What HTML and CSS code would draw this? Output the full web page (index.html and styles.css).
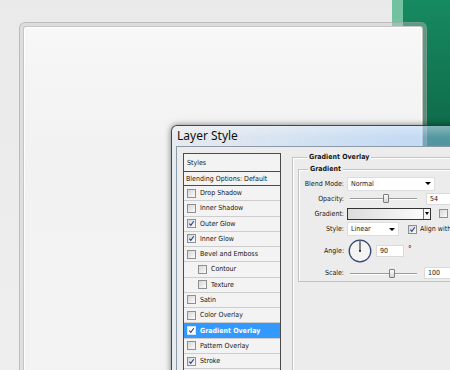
FILE: index.html
```html
<!DOCTYPE html>
<html>
<head>
<meta charset="utf-8">
<title>Layer Style</title>
<link rel="stylesheet" href="styles.css">
</head>
<body>
<div class="desk">
  <div class="green"></div>
  <div class="panel"><div class="panel-inner"></div></div>
  <div class="dialog">
    <div class="titlebar">Layer Style</div>
    <div class="client">
      <div class="list">
        <div class="row styles">Styles</div>
        <div class="row blend">Blending Options: Default</div>
        <div class="row"><span class="cb"></span>Drop Shadow</div>
        <div class="row"><span class="cb"></span>Inner Shadow</div>
        <div class="row"><span class="cb"><svg viewBox="0 0 8 8"><path d="M1.5 4.2 L3.2 6.2 L6.6 1.4"/></svg></span>Outer Glow</div>
        <div class="row"><span class="cb"><svg viewBox="0 0 8 8"><path d="M1.5 4.2 L3.2 6.2 L6.6 1.4"/></svg></span>Inner Glow</div>
        <div class="row"><span class="cb"></span>Bevel and Emboss</div>
        <div class="row sub"><span class="cb"></span>Contour</div>
        <div class="row sub"><span class="cb"></span>Texture</div>
        <div class="row"><span class="cb"></span>Satin</div>
        <div class="row"><span class="cb"></span>Color Overlay</div>
        <div class="row sel"><span class="cb"><svg viewBox="0 0 8 8"><path d="M1.5 4.2 L3.2 6.2 L6.6 1.4"/></svg></span>Gradient Overlay</div>
        <div class="row"><span class="cb"></span>Pattern Overlay</div>
        <div class="row"><span class="cb"><svg viewBox="0 0 8 8"><path d="M1.5 4.2 L3.2 6.2 L6.6 1.4"/></svg></span>Stroke</div>
        <div class="row"><span class="cb"></span></div>
      </div>
      <div class="settings">
        <div class="gbox outer">
          <div class="legend">Gradient Overlay</div>
          <div class="gbox inner">
            <div class="legend">Gradient</div>
            <div class="frow r1">
              <span class="lbl">Blend Mode:</span>
              <div class="dd dd-blend"><span>Normal</span><i class="arrow"></i></div>
            </div>
            <div class="frow r2">
              <span class="lbl">Opacity:</span>
              <div class="slider"><span class="thumb" style="left:33px"></span></div>
              <div class="num n-op">54</div>
            </div>
            <div class="frow r3">
              <span class="lbl">Gradient:</span>
              <div class="grad"><span class="grad-fill"></span><span class="grad-btn"><i class="arrow"></i></span></div>
              <span class="cb cb-rev"></span><span class="after">Reverse</span>
            </div>
            <div class="frow r4">
              <span class="lbl">Style:</span>
              <div class="dd dd-style"><span>Linear</span><i class="arrow"></i></div>
              <span class="cb cb-align"><svg viewBox="0 0 8 8"><path d="M1.5 4.2 L3.2 6.2 L6.6 1.4"/></svg></span><span class="after">Align with Layer</span>
            </div>
            <div class="frow r5">
              <span class="lbl">Angle:</span>
              <svg class="dial" viewBox="0 0 24 24"><circle cx="12" cy="12" r="10.8" fill="#f4f4f4" stroke="#34476c" stroke-width="1.3"/><line x1="12" y1="12" x2="12" y2="2" stroke="#151515" stroke-width="1"/><circle cx="12" cy="12" r="1" fill="#151515"/></svg>
              <div class="num n-ang">90</div>
              <span class="deg">°</span>
            </div>
            <div class="frow r6">
              <span class="lbl">Scale:</span>
              <div class="slider"><span class="thumb" style="left:39px"></span></div>
              <div class="num n-sc">100</div>
            </div>
          </div>
        </div>
      </div>
    </div>
  </div>
</div>
</body>
</html>
```
FILE: styles.css
```css
* { box-sizing: border-box; }
html, body { margin: 0; padding: 0; }
body {
  width: 450px;
  height: 370px;
  overflow: hidden;
  background: #ececec;
  font-family: "DejaVu Sans Condensed", "DejaVu Sans", sans-serif;
  color: #161616;
}
.desk {
  position: relative;
  width: 450px;
  height: 370px;
  overflow: hidden;
  background: linear-gradient(#eaeaea, #eeeeee);
}
.green {
  position: absolute;
  left: 392px;
  top: 0;
  width: 58px;
  height: 370px;
  background:
    linear-gradient(to right, #72c2a1 0, #72c2a1 11px, transparent 11px),
    linear-gradient(#168a61, #0f6b49 130px, #0c5f41);
}
.panel {
  position: absolute;
  left: 19px;
  top: 22px;
  width: 408px;
  height: 400px;
  border: 1px solid rgba(150, 150, 150, .45);
  border-radius: 6px;
  background: rgba(200, 200, 200, .38);
  padding: 3px;
}
.panel-inner {
  height: 100%;
  border: 1px solid rgba(185, 185, 185, .8);
  border-radius: 3px;
  background: linear-gradient(#f7f7f7, #f2f2f2 120px, #f3f3f3);
  box-shadow: inset 1px 1px 0 #fff, inset -1px 0 0 #fff;
}
.dialog {
  position: absolute;
  left: 171px;
  top: 125px;
  width: 320px;
  height: 300px;
  border: 1px solid rgba(35, 45, 60, .85);
  border-radius: 6px 6px 0 0;
  display: flex;
  flex-direction: column;
  background:
    linear-gradient(rgba(255, 255, 255, .3), rgba(255, 255, 255, 0) 12px),
    linear-gradient(to right, rgba(226, 230, 236, .65), rgba(150, 195, 245, .5) 230px);
  box-shadow: 0 0 6px rgba(0, 0, 0, .5);
}
.titlebar {
  height: 20px;
  flex: none;
  padding-left: 5px;
  font: 12px/20px "Noto Sans", sans-serif;
  color: #111;
}
.client {
  flex: 1;
  margin-left: 4px;
  border-left: 1px solid #8c99a8;
  border-top: 1px solid #8c99a8;
  background: #ececec;
  display: flex;
  align-items: flex-start;
  padding: 6px 0 0 6px;
}
.list {
  width: 98px;
  flex: none;
  border: 1px solid #4b4b4b;
  background: #f3f3f3;
  font-size: 7px;
}
.row {
  height: 15.27px;
  border-bottom: 1px solid #cdcdcd;
  display: flex;
  align-items: center;
  gap: 4px;
  padding-left: 3px;
  white-space: nowrap;
}
.row.styles { height: 18px; border-bottom-color: #4b4b4b; padding-left: 3px; }
.row.blend { height: 14px; border-bottom-color: #4b4b4b; padding-left: 2px; }
.row.sub { padding-left: 14px; }
.row.sel { background: #3399ff; color: #fff; font-weight: bold; }
.cb {
  width: 9px;
  height: 9px;
  flex: none;
  border: 1px solid #8e8f8f;
  background: linear-gradient(135deg, #d6d6d6, #fbfbfb);
  display: flex;
  align-items: center;
  justify-content: center;
}
.row.sel .cb { background: #fff; border-color: #d0e4ff; }
.cb svg { width: 7px; height: 7px; }
.cb path { fill: none; stroke: #23418f; stroke-width: 1.3; }
.settings {
  margin-left: 11px;
  margin-top: 4px;
  flex: none;
  font-size: 7px;
}
.gbox {
  border: 1px solid #c3c3c3;
  box-shadow: inset 1px 1px 0 #fff;
}
.gbox.outer { width: 200px; height: 260px; padding-left: 5px; }
.gbox.inner { width: 190px; margin-top: 6px; }
.legend {
  width: max-content;
  margin: -6px 0 0 9px;
  padding: 0 2px;
  background: #ececec;
  font-weight: bold;
  line-height: 11px;
}
.inner > .legend { margin-left: 9px; }
.frow { display: flex; align-items: center; white-space: nowrap; }
.r1 { height: 15px; margin-top: 1px; }
.r2 { height: 15px; }
.r3 { height: 15px; }
.r4 { height: 16px; }
.r5 { height: 28px; }
.r6 { height: 16px; }
.lbl { width: 45px; flex: none; text-align: right; margin-right: 3px; }
.dd {
  height: 14px;
  background: #fff;
  border: 1px solid #dedede;
  display: flex;
  align-items: center;
  padding: 0 3px;
}
.dd-blend { width: 88px; }
.dd-style { width: 52px; }
.arrow {
  margin-left: auto;
  width: 0;
  height: 0;
  border-left: 3px solid transparent;
  border-right: 3px solid transparent;
  border-top: 3px solid #000;
}
.slider {
  width: 67px;
  height: 9px;
  margin-left: 3px;
  position: relative;
  background: linear-gradient(transparent 4px, #9a9a9a 4px, #9a9a9a 5px, #fff 5px, #fff 6px, transparent 6px);
}
.thumb {
  position: absolute;
  top: 0;
  width: 6px;
  height: 9px;
  border: 1px solid #7d7d7d;
  border-radius: 1px;
  background: linear-gradient(#fdfdfd, #d6d6d6);
}
.num {
  height: 12px;
  width: 40px;
  background: #fff;
  border: 1px solid #dadada;
  padding-left: 3px;
  line-height: 10px;
}
.n-op { margin-left: 9px; }
.n-sc { margin-left: 7px; }
.n-ang { width: 28px; margin-left: 4px; }
.grad {
  width: 84px;
  height: 12px;
  border: 1px solid #333;
  display: flex;
}
.grad-fill { flex: 1; background: linear-gradient(to right, #dcdcdc, #fcfcfc); }
.grad-btn {
  width: 7px;
  border-left: 1px solid #777;
  background: #f4f4f4;
  display: flex;
  align-items: center;
  justify-content: center;
}
.grad-btn .arrow { margin-left: 0; border-left-width: 2px; border-right-width: 2px; }
.cb-rev { margin-left: 8px; }
.cb-align { margin-left: 9px; }
.after { margin-left: 3px; }
.dial { width: 24px; height: 24px; margin-left: 1px; flex: none; }
.deg { margin-left: 4px; align-self: flex-start; margin-top: 8px; font-size: 8px; }
```
